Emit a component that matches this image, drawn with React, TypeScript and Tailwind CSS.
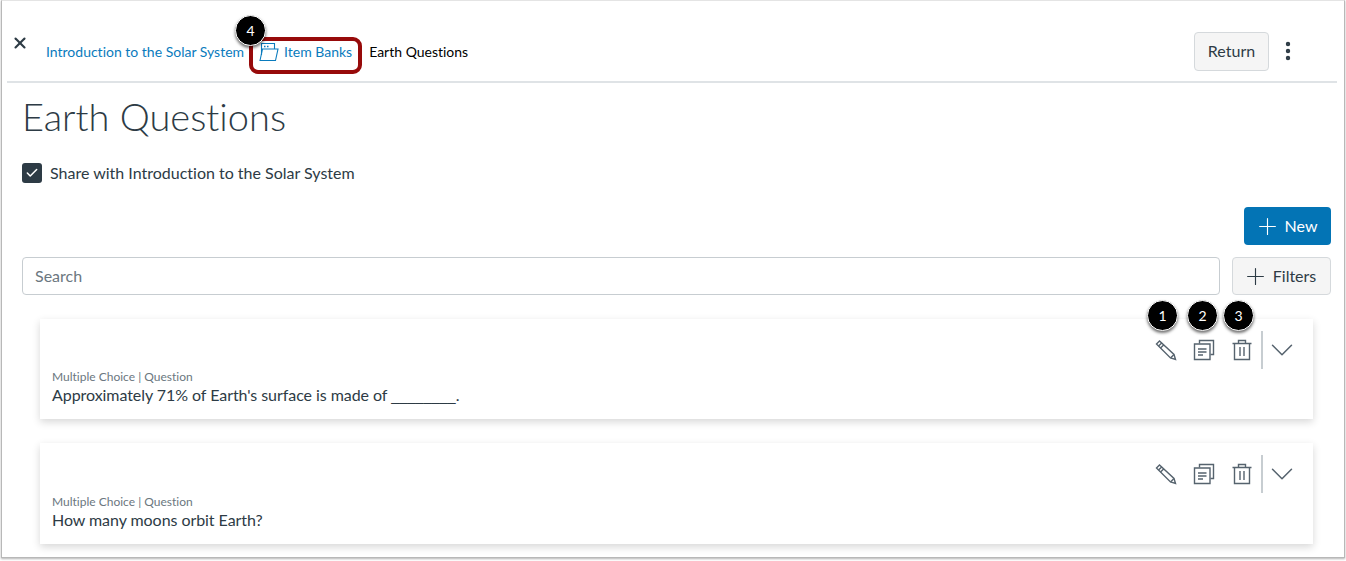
import type { ReactNode } from "react"
import { ChevronDown, MoreVertical, Plus, X, Check } from "lucide-react"

function FolderIcon() {
  return (
    <svg width="20" height="20" viewBox="0 0 20 20" fill="none" stroke="currentColor" strokeWidth="1.1">
      <path d="M2.5 13V1.5h13V7" />
      <path d="M1 18.5 3.5 7h15.5L16.5 18.5H1Z" />
      <path d="M5 4.5h1.5M8 4.5h1.5" strokeWidth="1.6" />
    </svg>
  )
}

function PencilIcon() {
  return (
    <svg width="22" height="22" viewBox="0 0 22 22" fill="none" stroke="#56636e" strokeWidth="1.4">
      <path d="M1.5 5 4.5 2 19 15.5 20.5 20.5 15.5 19 1.5 5Z" />
      <path d="M3.5 7 7 3.8M5.5 9l3.4-3.3M15.5 19l3.5-3.5" />
    </svg>
  )
}

function CopyIcon() {
  return (
    <svg width="22" height="22" viewBox="0 0 22 22" fill="none" stroke="#56636e" strokeWidth="1.4">
      <path d="M6.5 4.5V1.5h14v14h-3" />
      <path d="M1.5 5h15.5v15.5H1.5z" />
      <path d="M5 10h8.5M5 13h8.5M5 16h5" />
    </svg>
  )
}

function TrashIcon() {
  return (
    <svg width="22" height="22" viewBox="0 0 22 22" fill="none" stroke="#56636e" strokeWidth="1.4">
      <path d="M1.5 4.5h19M7.5 4.5V1.5h7v3" />
      <path d="M3.5 4.5v16h15v-16" />
      <path d="M9 8v9M13 8v9" />
    </svg>
  )
}

function Callout({ n, className }: { n: number; className: string }) {
  return (
    <div className={`absolute flex h-[31px] w-[31px] items-center justify-center rounded-full border border-white bg-black text-[14px] text-white shadow-[0_2px_3px_rgba(0,0,0,0.55)] ${className}`}>
      {n}
    </div>
  )
}

function QuestionCard({ children, className }: { children: ReactNode; className: string }) {
  return (
    <div className={`flex items-stretch justify-between bg-white pl-[12px] pr-[12px] shadow-[0_3px_8px_rgba(0,0,0,0.16)] ${className}`}>
      <div className="flex flex-col justify-end pb-[15px]">
        <div className="text-[12px] leading-[16px] text-[#6b7780]">Multiple Choice | Question</div>
        <div className="text-[16px] leading-[19px] tracking-[-0.06px] text-[#2d3b45]">{children}</div>
      </div>
      <div className="mt-[12px] flex h-[38px] items-center">
        <div className="mr-[8px] flex items-center gap-[16px]">
          <PencilIcon />
          <CopyIcon />
          <TrashIcon />
        </div>
        <div className="h-[38px] w-[2px] bg-[#c7cdd1]" />
        <ChevronDown className="h-[38px] w-[38px] text-[#56636e]" strokeWidth={0.95} />
      </div>
    </div>
  )
}

export default function App() {
  return (
    <div className="relative h-[561px] w-[1346px] overflow-hidden bg-white font-['Lato','Open_Sans',sans-serif] [font-variant-ligatures:none]">
      <div className="ml-[1px] h-[558px] w-[1344px] border border-[#b8b8b8] border-t-[#e4e4e4] shadow-[0_1px_2px_rgba(0,0,0,0.3)]">
        {/* header */}
        <div className="ml-[5px] mr-[7px] flex h-[82px] items-center justify-between border-b-2 border-[#dfe3e6] pr-[37px]">
          <div className="flex h-full items-start">
            <X className="ml-[4px] mt-[33px] h-[18px] w-[18px] text-[#2d3b45]" strokeWidth={2.8} />
            <div className="ml-[17px] mt-[41px] flex items-center text-[14px] leading-[20px]">
              <span className="text-[#0a7bbd]">Introduction to the Solar System</span>
              <span className="ml-[15px] text-[#0a7bbd]"><FolderIcon /></span>
              <span className="ml-[5px] text-[#0a7bbd]">Item Banks</span>
              <span className="ml-[17px] text-black">Earth Questions</span>
            </div>
          </div>
          <div className="mt-[20px] flex items-center">
            <div className="flex h-[39px] w-[75px] items-center justify-center rounded-[4px] border border-[#d5d9dc] bg-[#f5f5f5] text-[16px] text-[#2d3b45]">Return</div>
            <MoreVertical className="ml-[7px] h-[24px] w-[24px] text-[#2d3b45]" strokeWidth={2.4} />
          </div>
        </div>

        {/* title */}
        <div className="pl-[20px] pr-[13px]">
          <h1 className="mt-[10px] text-[38px] font-light leading-[46px] text-[#2d3b45]">Earth Questions</h1>
          <div className="mt-[22px] flex items-center">
            <div className="flex h-[20px] w-[20px] items-center justify-center rounded-[3px] bg-[#2d3b45]">
              <Check className="h-[14px] w-[14px] text-white" strokeWidth={2.6} />
            </div>
            <span className="ml-[8px] text-[16px] leading-[24px] text-[#2d3b45]">Share with Introduction to the Solar System</span>
          </div>
          <div className="mt-[22px] flex justify-end">
            <div className="flex h-[38px] w-[87px] items-center justify-center rounded-[4px] bg-[#0374b5] pr-[4px] text-[16px] text-white">
              <Plus className="mr-[4px] h-[27px] w-[27px]" strokeWidth={1} />
              New
            </div>
          </div>
          <div className="mt-[12px] flex">
            <div className="flex h-[38px] w-[1199px] items-center rounded-[4px] border border-[#c7cdd1] bg-white pl-[12px] text-[16px] text-[#6b7780]">Search</div>
            <div className="ml-[12px] flex h-[38px] w-[99px] items-center justify-center rounded-[4px] border border-[#d5d9dc] bg-[#f5f5f5] pr-[5px] text-[16px] text-[#2d3b45]">
              <Plus className="mr-[4px] h-[27px] w-[27px]" strokeWidth={1} />
              Filters
            </div>
          </div>
        </div>

        {/* question list */}
        <div className="ml-[38px] mt-[24px] flex w-[1273px] flex-col gap-[24px]">
          <QuestionCard className="h-[100px]">
            Approximately 71% of Earth's surface is made of{" "}
            <span className="font-['Liberation_Sans'] text-[14.5px] leading-none tracking-normal">________</span>.
          </QuestionCard>
          <QuestionCard className="h-[101px]">How many moons orbit Earth?</QuestionCard>
        </div>
      </div>

      {/* annotation overlays */}
      <div className="absolute left-[249px] top-[37px] h-[37px] w-[113px] rounded-[9px] border-[4px] border-[#970a0a]" />
      <Callout n={4} className="left-[235px] top-[15px]" />
      <Callout n={1} className="left-[1147px] top-[300px]" />
      <Callout n={2} className="left-[1187px] top-[300px]" />
      <Callout n={3} className="left-[1223px] top-[300px]" />
    </div>
  )
}
